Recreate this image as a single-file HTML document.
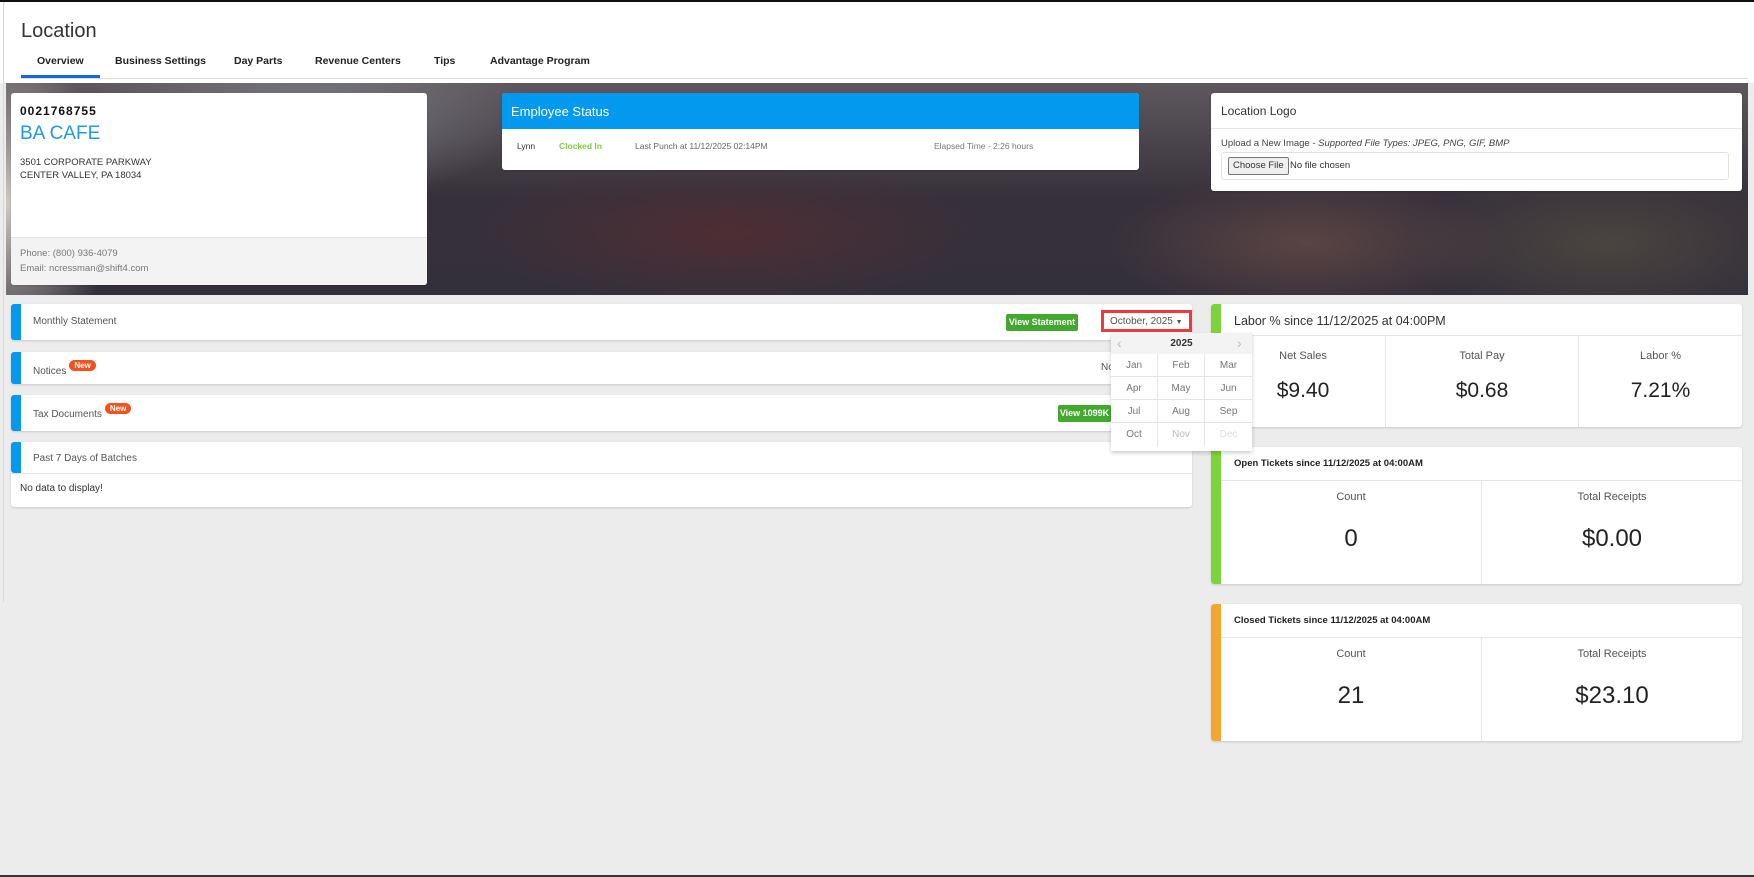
<!DOCTYPE html>
<html><head><meta charset="utf-8"><style>
*{box-sizing:border-box;margin:0;padding:0}
body{width:1754px;height:877px;position:relative;background:#ececec;font-family:"Liberation Sans",sans-serif;color:#333;overflow:hidden}
.a{position:absolute}
.card{position:absolute;background:#fff;border-radius:3px;box-shadow:0 1px 2px rgba(0,0,0,.15)}
.stripe{position:absolute;left:0;top:0;bottom:0;width:10px;border-radius:3px 0 0 3px}
.new{display:inline-block;background:#f4511e;color:#fff;font-size:8px;font-weight:bold;padding:1px 5px;border-radius:8px;vertical-align:6px;margin-left:3px}
.btn{position:absolute;background:#43a82e;color:#fff;font-size:9px;font-weight:bold;text-align:center;border-radius:2px}
.col{position:absolute;top:0;bottom:0;text-align:center}
.lbl{font-size:11px;color:#555}
.big{color:#222}
.m{position:absolute;width:47px;height:23px;line-height:23px;text-align:center;font-size:10px;color:#777;border-right:1px solid #e4e4e4;border-bottom:1px solid #e4e4e4}
</style></head><body>
<div class="a" style="left:0;top:0;width:1754px;height:2px;background:#111"></div>
<div class="a" style="left:0;top:2px;width:1754px;height:81px;background:#fff"></div>
<div class="a" style="left:3px;top:2px;width:1px;height:600px;background:#d8d8d8"></div>
<div class="a" style="left:21px;top:20px;font-size:20px;color:#333">Location</div>
<div class="a" style="left:21px;top:55px;font-size:10.5px;font-weight:bold;color:#222">
<span class="a" style="left:16px;white-space:nowrap">Overview</span>
<span class="a" style="left:94px;white-space:nowrap">Business Settings</span>
<span class="a" style="left:213px;white-space:nowrap">Day Parts</span>
<span class="a" style="left:294px;white-space:nowrap">Revenue Centers</span>
<span class="a" style="left:413px;white-space:nowrap">Tips</span>
<span class="a" style="left:469px;white-space:nowrap">Advantage Program</span>
</div>
<div class="a" style="left:21px;top:75px;width:79px;height:3px;background:#1565e0"></div>
<div class="a" style="left:21px;top:78px;width:1727px;height:1px;background:#ddd"></div>
<!-- hero -->
<div class="a" style="left:6px;top:83px;width:1742px;height:212px;background:
radial-gradient(ellipse 110px 150px at 0px 120px,#cfcac2,transparent),
radial-gradient(ellipse 200px 40px at 720px 260px,#5f6d80,transparent),
radial-gradient(ellipse 150px 40px at 1050px 250px,#6d8590,transparent),
radial-gradient(ellipse 220px 90px at 300px 30px,#7a7a80,transparent),
radial-gradient(ellipse 260px 70px at 720px 150px,#4e2e34,transparent),
radial-gradient(ellipse 200px 70px at 1300px 160px,#5a4444,transparent),
radial-gradient(ellipse 200px 80px at 1600px 160px,#4a4440,transparent),
linear-gradient(180deg,#5e585e,#36303a 55%,#34303a)"></div>
<!-- address -->
<div class="card" style="left:11px;top:93px;width:416px;height:192px;overflow:hidden">
<div class="a" style="left:9px;top:11px;font-size:12px;font-weight:bold;letter-spacing:1px;color:#111">0021768755</div>
<div class="a" style="left:9px;top:30px;font-size:19px;color:#1e9ae8">BA CAFE</div>
<div class="a" style="left:9px;top:63px;font-size:9.5px;line-height:13px;color:#333">3501 CORPORATE PARKWAY<br>CENTER VALLEY, PA 18034</div>
<div class="a" style="left:0;top:144px;width:416px;height:48px;background:#f3f3f4;border-top:1px solid #e0e0e0"></div>
<div class="a" style="left:9px;top:153px;font-size:9.5px;line-height:15px;color:#777">Phone: (800) 936-4079<br>Email: ncressman@shift4.com</div>
</div>
<!-- employee -->
<div class="card" style="left:502px;top:93px;width:637px;height:77px;overflow:hidden">
<div class="a" style="left:0;top:0;width:637px;height:36px;background:#0399ee"></div>
<div class="a" style="left:9px;top:11px;font-size:13px;color:#fff">Employee Status</div>
<div class="a" style="left:15px;top:48px;font-size:8.5px;color:#333">Lynn</div>
<div class="a" style="left:57px;top:48px;font-size:8.5px;color:#7bd13a;font-weight:bold">Clocked In</div>
<div class="a" style="left:133px;top:48px;font-size:8.5px;color:#666">Last Punch at 11/12/2025 02:14PM</div>
<div class="a" style="left:432px;top:48px;font-size:8.5px;color:#777">Elapsed Time - 2:26 hours</div>
</div>
<!-- logo -->
<div class="card" style="left:1211px;top:93px;width:531px;height:98px">
<div class="a" style="left:10px;top:11px;font-size:12px;color:#333">Location Logo</div>
<div class="a" style="left:0;top:35px;width:531px;height:1px;background:#e5e5e5"></div>
<div class="a" style="left:10px;top:45px;font-size:9.5px;color:#444">Upload a New Image - <i>Supported File Types: JPEG, PNG, GIF, BMP</i></div>
<div class="a" style="left:10px;top:59px;width:508px;height:28px;border:1px solid #e2e2e2;border-radius:3px"></div>
<div class="a" style="left:17px;top:64px;height:18px;padding:0 4px;line-height:16px;font-size:9.5px;background:#efefef;border:1px solid #777;border-radius:2px">Choose File</div>
<div class="a" style="left:79px;top:67px;font-size:9.5px;color:#333">No file chosen</div>
</div>
<!-- left rows -->
<div class="card" style="left:11px;top:304px;width:1181px;height:36px"><div class="stripe" style="background:#0399ee"></div>
<div class="a" style="left:22px;top:12px;font-size:10px;color:#555">Monthly Statement</div></div>
<div class="btn" style="left:1006px;top:314px;width:72px;height:17px;line-height:17px">View Statement</div>
<div class="card" style="left:11px;top:352px;width:1181px;height:32px"><div class="stripe" style="background:#0399ee"></div>
<div class="a" style="left:22px;top:8px;font-size:10px;color:#555">Notices<span class="new">New</span></div>
<div class="a" style="left:1090px;top:10px;font-size:10px;color:#555">No</div></div>
<div class="card" style="left:11px;top:395px;width:1181px;height:36px"><div class="stripe" style="background:#0399ee"></div>
<div class="a" style="left:22px;top:8px;font-size:10px;color:#555">Tax Documents<span class="new">New</span></div></div>
<div class="btn" style="left:1058px;top:405px;width:53px;height:17px;line-height:17px">View 1099K</div>
<div class="card" style="left:11px;top:442px;width:1181px;height:65px"><div class="stripe" style="background:#0399ee;bottom:34px"></div>
<div class="a" style="left:22px;top:11px;font-size:10px;color:#555">Past 7 Days of Batches</div>
<div class="a" style="left:0;top:31px;width:1181px;height:1px;background:#e5e5e5"></div>
<div class="a" style="left:9px;top:41px;font-size:10px;color:#333">No data to display!</div></div>
<!-- right: labor -->
<div class="card" style="left:1211px;top:304px;width:531px;height:123px;overflow:hidden"><div class="stripe" style="background:#7dd43a"></div>
<div class="a" style="left:23px;top:10px;font-size:12.5px;color:#333">Labor % since 11/12/2025 at 04:00PM</div>
<div class="a" style="left:10px;top:31px;width:521px;height:1px;background:#e5e5e5"></div>
<div class="col" style="left:10px;width:164px;top:32px"><div class="lbl" style="margin-top:14px">Net Sales</div><div class="big" style="font-size:21px;margin-top:17px">$9.40</div></div>
<div class="col" style="left:174px;width:193px;top:32px;border-left:1px solid #e5e5e5"><div class="lbl" style="margin-top:14px">Total Pay</div><div class="big" style="font-size:21px;margin-top:17px">$0.68</div></div>
<div class="col" style="left:367px;width:164px;top:32px;border-left:1px solid #e5e5e5"><div class="lbl" style="margin-top:14px">Labor %</div><div class="big" style="font-size:21px;margin-top:17px">7.21%</div></div>
</div>
<!-- open tickets -->
<div class="card" style="left:1211px;top:447px;width:531px;height:137px;overflow:hidden"><div class="stripe" style="background:#7dd43a"></div>
<div class="a" style="left:23px;top:11px;font-size:9.5px;font-weight:bold;color:#222">Open Tickets since 11/12/2025 at 04:00AM</div>
<div class="a" style="left:10px;top:33px;width:521px;height:1px;background:#e5e5e5"></div>
<div class="col" style="left:10px;width:260px;top:34px"><div class="lbl" style="margin-top:10px">Count</div><div class="big" style="font-size:24px;margin-top:22px">0</div></div>
<div class="col" style="left:270px;width:261px;top:34px;border-left:1px solid #e5e5e5"><div class="lbl" style="margin-top:10px">Total Receipts</div><div class="big" style="font-size:24px;margin-top:22px">$0.00</div></div>
</div>
<!-- closed -->
<div class="card" style="left:1211px;top:604px;width:531px;height:137px;overflow:hidden"><div class="stripe" style="background:#f5a631"></div>
<div class="a" style="left:23px;top:11px;font-size:9.5px;font-weight:bold;color:#222">Closed Tickets since 11/12/2025 at 04:00AM</div>
<div class="a" style="left:10px;top:33px;width:521px;height:1px;background:#e5e5e5"></div>
<div class="col" style="left:10px;width:260px;top:34px"><div class="lbl" style="margin-top:10px">Count</div><div class="big" style="font-size:24px;margin-top:22px">21</div></div>
<div class="col" style="left:270px;width:261px;top:34px;border-left:1px solid #e5e5e5"><div class="lbl" style="margin-top:10px">Total Receipts</div><div class="big" style="font-size:24px;margin-top:22px">$23.10</div></div>
</div>
<!-- dropdown -->
<div class="a" style="left:1101px;top:310px;width:91px;height:22px;border:3px solid #f0393f;background:#fff;z-index:10"></div>
<div class="a" style="left:1110px;top:316px;font-size:10px;color:#555;z-index:11">October, 2025 <span style="font-size:7px">▼</span></div>
<div class="a" style="left:1111px;top:333px;width:141px;height:118px;background:#fff;box-shadow:0 2px 4px rgba(0,0,0,.2);z-index:10">
<div class="a" style="left:0;top:0;width:141px;height:21px;background:#f3f3f3"></div>
<div class="a" style="left:6px;top:2px;font-size:14px;color:#bbb">‹</div>
<div class="a" style="left:126px;top:2px;font-size:14px;color:#bbb">›</div>
<div class="a" style="left:0;top:5px;width:141px;text-align:center;font-size:10px;font-weight:bold;color:#333">2025</div>
<div class="m" style="left:0;top:21px">Jan</div><div class="m" style="left:47px;top:21px">Feb</div><div class="m" style="left:94px;top:21px;border-right:0">Mar</div>
<div class="m" style="left:0;top:44px">Apr</div><div class="m" style="left:47px;top:44px">May</div><div class="m" style="left:94px;top:44px;border-right:0">Jun</div>
<div class="m" style="left:0;top:67px">Jul</div><div class="m" style="left:47px;top:67px">Aug</div><div class="m" style="left:94px;top:67px;border-right:0">Sep</div>
<div class="m" style="left:0;top:90px;border-bottom:0">Oct</div><div class="m" style="left:47px;top:90px;border-bottom:0;color:#bbb">Nov</div><div class="m" style="left:94px;top:90px;border-bottom:0;border-right:0;color:#ddd">Dec</div>
</div>
<div class="a" style="left:0;top:875px;width:1754px;height:2px;background:#333"></div>
</body></html>
